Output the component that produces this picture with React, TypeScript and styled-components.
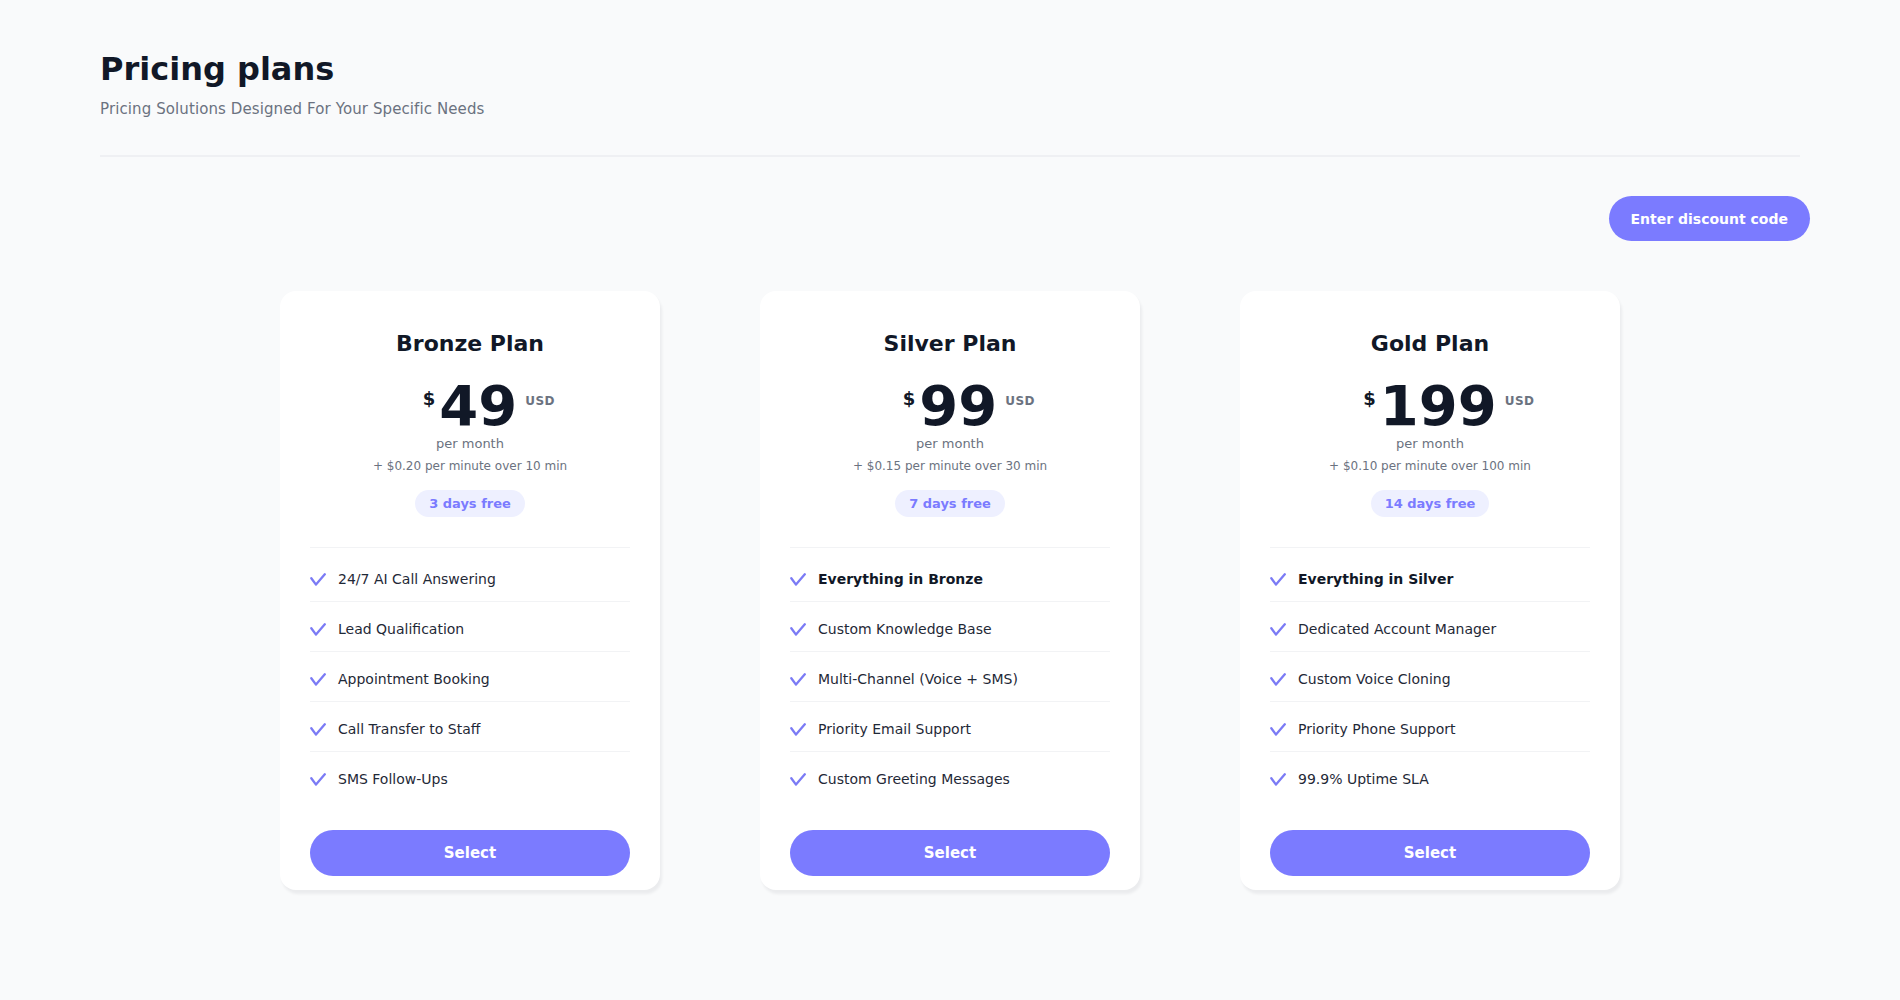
import styled, { createGlobalStyle } from "styled-components";

interface Feature {
  label: string;
  bold?: boolean;
}

interface Plan {
  name: string;
  price: string;
  overage: string;
  trial: string;
  features: Feature[];
}

const plans: Plan[] = [
  {
    name: "Bronze Plan",
    price: "49",
    overage: "+ $0.20 per minute over 10 min",
    trial: "3 days free",
    features: [
      { label: "24/7 AI Call Answering" },
      { label: "Lead Qualification" },
      { label: "Appointment Booking" },
      { label: "Call Transfer to Staff" },
      { label: "SMS Follow-Ups" },
    ],
  },
  {
    name: "Silver Plan",
    price: "99",
    overage: "+ $0.15 per minute over 30 min",
    trial: "7 days free",
    features: [
      { label: "Everything in Bronze", bold: true },
      { label: "Custom Knowledge Base" },
      { label: "Multi-Channel (Voice + SMS)" },
      { label: "Priority Email Support" },
      { label: "Custom Greeting Messages" },
    ],
  },
  {
    name: "Gold Plan",
    price: "199",
    overage: "+ $0.10 per minute over 100 min",
    trial: "14 days free",
    features: [
      { label: "Everything in Silver", bold: true },
      { label: "Dedicated Account Manager" },
      { label: "Custom Voice Cloning" },
      { label: "Priority Phone Support" },
      { label: "99.9% Uptime SLA" },
    ],
  },
];

const GlobalStyle = createGlobalStyle`
  * {
    box-sizing: border-box;
  }
  body {
    margin: 0;
    background-color: #f9fafb;
    font-family: "DejaVu Sans", "Noto Sans", sans-serif;
    color: #111827;
  }
`;

const Page = styled.div`
  min-height: 1000px;
  padding: 50px 90px 0;
`;

const Header = styled.header`
  margin: 0 10px;
  padding-bottom: 37px;
  border-bottom: 2px solid #eff0f3;
`;

const Title = styled.h1`
  margin: 0 0 12px;
  font-size: 32px;
  font-weight: 700;
  color: #111827;
`;

const Subtitle = styled.p`
  margin: 0;
  font-size: 15px;
  letter-spacing: 0.1px;
  color: #6b7280;
`;

const Toolbar = styled.div`
  display: flex;
  justify-content: flex-end;
  margin-top: 39px;
`;

const PillButton = styled.button<{ $wide?: boolean }>`
  display: flex;
  align-items: center;
  justify-content: center;
  height: ${(p) => (p.$wide ? "46px" : "45px")};
  width: ${(p) => (p.$wide ? "100%" : "auto")};
  padding: 0 22px;
  border: none;
  border-radius: 999px;
  background-color: #7b7bff;
  color: #ffffff;
  font-family: inherit;
  font-size: ${(p) => (p.$wide ? "15px" : "14px")};
  font-weight: 700;
  cursor: pointer;
`;

const Cards = styled.div`
  display: flex;
  justify-content: center;
  gap: 100px;
  margin-top: 50px;
`;

const Card = styled.div`
  width: 380px;
  padding: 40px 30px 14px;
  background-color: #ffffff;
  border-radius: 16px;
  box-shadow: 2px 4px 3px rgba(17, 24, 39, 0.06);
`;

const CardHead = styled.div`
  display: flex;
  flex-direction: column;
  align-items: center;
  padding-bottom: 30px;
  border-bottom: 1px solid #f2f3f5;
`;

const PlanName = styled.h2`
  margin: 0;
  font-size: 22px;
  font-weight: 700;
  color: #111827;
`;

const Price = styled.div`
  position: relative;
  display: flex;
  align-items: flex-start;
  margin-top: 22px;
`;

const Currency = styled.span`
  margin: 10px 4px 0 0;
  font-size: 18px;
  font-weight: 700;
  color: #111827;
`;

const Amount = styled.span`
  font-size: 56px;
  line-height: 1;
  font-weight: 700;
  color: #111827;
`;

const Unit = styled.span`
  position: absolute;
  left: calc(100% + 8px);
  top: 16px;
  font-size: 12px;
  font-weight: 700;
  letter-spacing: 0.5px;
  color: #6b7280;
`;

const Period = styled.div`
  margin-top: 2px;
  font-size: 13px;
  color: #6b7280;
`;

const Overage = styled.div`
  margin-top: 8px;
  font-size: 12px;
  color: #6b7280;
`;

const TrialBadge = styled.span`
  margin-top: 17px;
  padding: 6px 14px;
  border-radius: 999px;
  background-color: #eef0ff;
  color: #7b7bff;
  font-size: 13px;
  font-weight: 700;
`;

const FeatureList = styled.ul`
  list-style: none;
  margin: 0 0 29px;
  padding: 4px 0 0;
`;

const FeatureRow = styled.li<{ $bold?: boolean }>`
  display: flex;
  align-items: flex-start;
  gap: 12px;
  padding: 19px 0 14px;
  font-size: 14px;
  line-height: 16px;
  font-weight: ${(p) => (p.$bold ? 700 : 400)};
  color: ${(p) => (p.$bold ? "#111827" : "#1f2937")};
  border-bottom: 1px solid #f2f3f5;

  &:last-child {
    border-bottom: none;
  }
`;

const CheckIcon = styled.svg`
  flex-shrink: 0;
  width: 16px;
  height: 13px;
  margin-top: 2px;
`;

const Check = () => (
  <CheckIcon viewBox="0 0 16 13" fill="none">
    <path
      d="M1.3 5.2 L6 11.6 L14.8 1.3"
      stroke="#7b7bf5"
      strokeWidth="2.3"
      strokeLinecap="round"
      strokeLinejoin="round"
    />
  </CheckIcon>
);

const PlanCard = ({ plan }: { plan: Plan }) => (
  <Card>
    <CardHead>
      <PlanName>{plan.name}</PlanName>
      <Price>
        <Currency>$</Currency>
        <Amount>{plan.price}</Amount>
        <Unit>USD</Unit>
      </Price>
      <Period>per month</Period>
      <Overage>{plan.overage}</Overage>
      <TrialBadge>{plan.trial}</TrialBadge>
    </CardHead>
    <FeatureList>
      {plan.features.map((feature) => (
        <FeatureRow key={feature.label} $bold={feature.bold}>
          <Check />
          {feature.label}
        </FeatureRow>
      ))}
    </FeatureList>
    <PillButton $wide>Select</PillButton>
  </Card>
);

const App = () => {
  return (
    <>
      <GlobalStyle />
      <Page>
        <Header>
          <Title>Pricing plans</Title>
          <Subtitle>Pricing Solutions Designed For Your Specific Needs</Subtitle>
        </Header>
        <Toolbar>
          <PillButton>Enter discount code</PillButton>
        </Toolbar>
        <Cards>
          {plans.map((plan) => (
            <PlanCard key={plan.name} plan={plan} />
          ))}
        </Cards>
      </Page>
    </>
  );
};

export default App;
